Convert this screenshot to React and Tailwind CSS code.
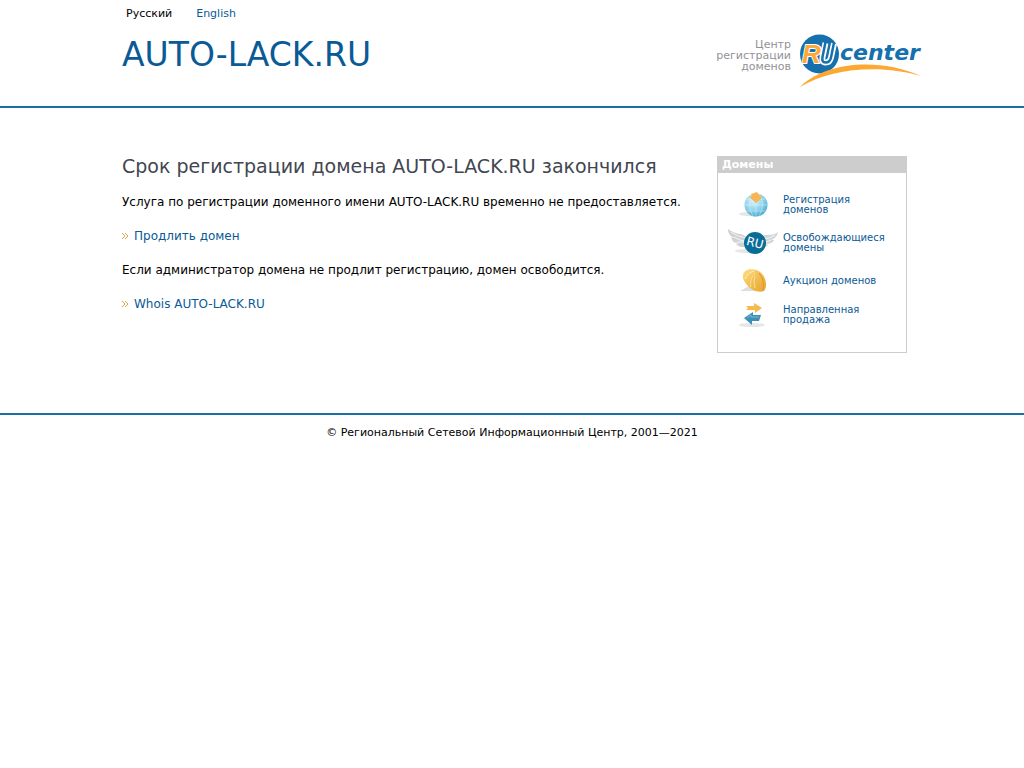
const linkClass = "text-[#0a5a96] hover:underline";

function Logo() {
  return (
    <svg className="h-14 w-32 shrink-0" viewBox="0 0 128 56" role="img" aria-label="RU center">
      <circle cx="20.500" cy="20" r="19.500" fill="#1570ad" />
      <path d="M26.500 9 23.500 23q-1 5.500 3 5.500 4.500 0 5.500-5l3-14" fill="none" stroke="#fff" strokeWidth="6" />
      <path d="M26.500 8 23.500 23q-1 5.500 3 5.500 4.500 0 5.500-5l3-15" fill="none" stroke="#1570ad" strokeWidth="2.500" />
      <text x="3" y="29" fontSize="26" fontStyle="italic" fontWeight="700" fontFamily="'Liberation Sans', sans-serif" fill="#fda83a" stroke="#fff" strokeWidth="2" paintOrder="stroke">R</text>
      <text x="41" y="26" fontSize="22" fontStyle="italic" fontWeight="700" fontFamily="'DejaVu Sans', sans-serif" fill="#1570ad">center</text>
      <path d="M1 53C26 28 79 23 122 42 82 30 32 34 1 53Z" fill="#fda832" />
    </svg>
  );
}

function GlobeIcon() {
  return (
    <svg className="h-7 w-14" viewBox="0 0 56 28" aria-hidden="true">
      <defs>
        <radialGradient id="globe" cx=".4" cy=".3" r=".8">
          <stop offset="0" stopColor="#d9f5fd" />
          <stop offset=".55" stopColor="#8dd1ea" />
          <stop offset="1" stopColor="#399fc5" />
        </radialGradient>
      </defs>
      <ellipse cx="26" cy="23" rx="11" ry="2" fill="#e6e6e6" />
      <circle cx="32" cy="14" r="11.500" fill="url(#globe)" />
      <path d="M32 3v22M21 14h22M23 8h18M23 20h18M29 3q-7 11 0 22M35 3q7 11 0 22" fill="none" stroke="#e7f9ff" strokeWidth=".6" opacity=".7" />
      <path d="M27 3 33 1l3 4 3 1-7 6-7-6 3-1Z" fill="#f5b653" />
    </svg>
  );
}

function WingsIcon() {
  return (
    <svg className="h-9 w-14" viewBox="0 -1 56 36" aria-hidden="true">
      <ellipse cx="24" cy="25" rx="13" ry="2" fill="#e6e6e6" />
      <path d="M24 13C19 6 14 10 4 3c0 5 3 8 7 9-2 0-3 0-4-1 1 5 4 6 8 6l-3 1c3 4 8 3 11 3Z" fill="#cfd1d3" />
      <path d="M37 11C42 7 47 11 54 6c-1 5-4 7-7 8h3c-1 3-5 4-8 4l2 1c-2 3-5 2-7 2Z" fill="#d3d5d7" />
      <path d="M7 6q7 5 15 6M10 11q6 4 12 4M13 16h8M51 9q-5 4-12 4M47 14q-4 3-8 2" fill="none" stroke="#f5f5f5" />
      <circle cx="31" cy="17" r="11" fill="#096d98" />
      <text x="31" y="21" fontSize="12" textAnchor="middle" fontFamily="'DejaVu Sans', sans-serif" fill="#fff" transform="rotate(14 31 17)">RU</text>
    </svg>
  );
}

function CoinIcon() {
  return (
    <svg className="h-7 w-14" viewBox="0 0 56 28" aria-hidden="true">
      <defs>
        <linearGradient id="coin" x2="1" y2="1">
          <stop offset="0" stopColor="#ffdf87" />
          <stop offset=".5" stopColor="#f2bd50" />
          <stop offset="1" stopColor="#e7a534" />
        </linearGradient>
      </defs>
      <path d="M16 24h20l-11-5Z" fill="#dedede" />
      <path d="M19 8C20 1 31 1 36 5c6 4 8 14 4 19-6 2-12-1-16-5-3-3-6-7-5-11Z" fill="url(#coin)" />
      <path d="M21 12Q23 6 30 4" fill="none" stroke="#fff0b9" />
      <path d="M27 20q-2-8 4-14M31 21q-2-6 0-12" fill="none" stroke="#fae096" />
      <path d="M35 6q6 7 4 18" fill="none" stroke="#d99b31" />
    </svg>
  );
}

function ArrowsIcon() {
  return (
    <svg className="h-7 w-14" viewBox="0 0 56 28" aria-hidden="true">
      <ellipse cx="28" cy="24" rx="13" ry="2" fill="#e6e6e6" />
      <path d="M22 5h8V2l8 5-7 5V9h-9l2-2Z" fill="#f5b950" />
      <path d="m20 17 9-6v3h8l-2 6h-7v4Z" fill="#3c8fb5" />
      <path d="m23 17 4-3v2h8" fill="none" stroke="#79b9d3" />
    </svg>
  );
}

const services = [
  { label: "Регистрация доменов", Icon: GlobeIcon },
  { label: "Освобождающиеся домены", Icon: WingsIcon },
  { label: "Аукцион доменов", Icon: CoinIcon },
  { label: "Направленная продажа", Icon: ArrowsIcon },
];

function ActionLink({ children }) {
  return (
    <p className="flex items-center gap-1">
      <svg className="h-2 w-2 shrink-0" viewBox="0 0 8 8" fill="none" stroke="#e5a24b" aria-hidden="true">
        <path d="m0 1 3 3-3 3m3-6 3 3-3 3" />
      </svg>
      <a href="#" className={linkClass}>{children}</a>
    </p>
  );
}

export default function App() {
  return (
    <div className="bg-white font-['Verdana','DejaVu_Sans',sans-serif] text-xs text-black">
      <header className="border-b-2 border-[#1b6fa5] pr-[97px] pb-4 pl-[122px]">
        <nav className="flex gap-6 px-1 pt-1 text-[11px] leading-5">
          <span>Русский</span>
          <a href="#" className={linkClass}>English</a>
        </nav>
        <div className="flex items-start justify-between pt-1.5">
          <div className="pt-1 text-[33px] leading-[42px] text-[#0a5a96]">AUTO-LACK.RU</div>
          <div className="flex gap-2 pt-1">
            <p className="w-20 pt-[5px] text-right text-[11px] leading-[11px] text-[#929297]">
              Центр регистрации доменов
            </p>
            <Logo />
          </div>
        </div>
      </header>

      <div className="flex items-start justify-between gap-8 pt-12 pr-[117px] pb-15 pl-[122px]">
        <main className="flex flex-col gap-4 leading-[18px]">
          <h1 className="text-[19px] leading-[21px] text-[#414651]">Срок регистрации домена AUTO-LACK.RU закончился</h1>
          <p>Услуга по регистрации доменного имени AUTO-LACK.RU временно не предоставляется.</p>
          <ActionLink>Продлить домен</ActionLink>
          <p>Если администратор домена не продлит регистрацию, домен освободится.</p>
          <ActionLink>Whois AUTO-LACK.RU</ActionLink>
        </main>
        <aside className="w-[190px] shrink-0 border border-[#cdcdcd]">
          <h2 className="bg-[#cdcdcd] px-1 text-[11px] leading-4 font-bold text-white">Домены</h2>
          <ul className="flex flex-col gap-1.5 pt-[18px] pb-[23px] pl-1.5">
            {services.map(({ label, Icon }) => (
              <li key={label}>
                <a href="#" className="flex items-center gap-[3px] text-[10px] leading-[10px] text-[#0a5a96] hover:underline">
                  <Icon />
                  <span className="w-28">{label}</span>
                </a>
              </li>
            ))}
          </ul>
        </aside>
      </div>

      <footer className="border-t-2 border-[#1b6fa5] pt-2 text-center text-[11px] leading-5">
        © Региональный Сетевой Информационный Центр, 2001—2021
      </footer>
    </div>
  );
}
